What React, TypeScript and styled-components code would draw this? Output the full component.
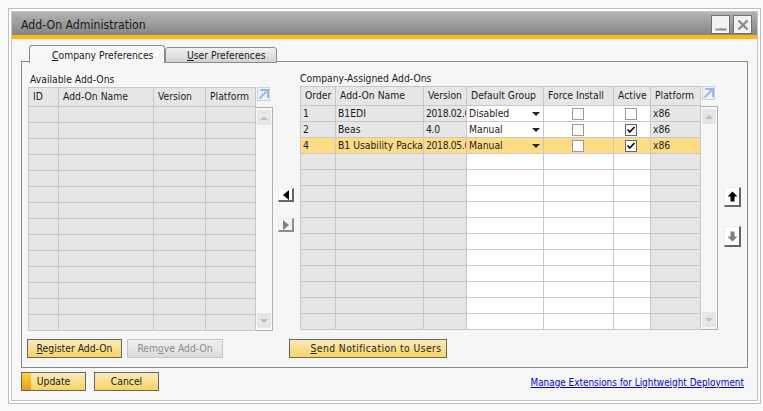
// App.tsx
import React from "react";
import styled, { createGlobalStyle } from "styled-components";

type Cell = { text?: string; kind?: "text" | "select" | "check"; checked?: boolean };
type Column = { title: string; width: number; plain?: boolean; center?: boolean; tight?: boolean };

const availableColumns: Column[] = [
  { title: "ID", width: 31 },
  { title: "Add-On Name", width: 95 },
  { title: "Version", width: 52 },
  { title: "Platform", width: 50 },
];

const assignedColumns: Column[] = [
  { title: "Order", width: 36 },
  { title: "Add-On Name", width: 88 },
  { title: "Version", width: 43, tight: true },
  { title: "Default Group", width: 77, plain: true },
  { title: "Force Install", width: 70, plain: true, center: true },
  { title: "Active", width: 37, plain: true, center: true },
  { title: "Platform", width: 50 },
];

const assignedRows = [
  { order: "1", name: "B1EDI", version: "2018.02.0", group: "Disabled", active: false },
  { order: "2", name: "Beas", version: "4.0", group: "Manual", active: true },
  { order: "4", name: "B1 Usability Package", version: "2018.05.0", group: "Manual", active: true, selected: true },
];

const GRID_ROWS = 14;

function ExpandIcon() {
  return (
    <svg width="13" height="14" viewBox="0 0 13 14">
      <rect x="0.5" y="0.5" width="12" height="13" fill="#eef2f8" stroke="#c4d3e8" />
      <path d="M3 3h8v8M10.5 3.5L2.5 11.5" fill="none" stroke="#9db9e0" strokeWidth="2" />
    </svg>
  );
}

function CheckMark() {
  return (
    <svg width="10" height="10" viewBox="0 0 10 10">
      <path d="M1.5 4.5l2.3 2.5L8.5 2" fill="none" stroke="#111" strokeWidth="1.8" />
    </svg>
  );
}

function DataGrid({
  columns,
  rows,
}: {
  columns: Column[];
  rows: { cells: Cell[]; selected?: boolean }[];
}) {
  const template = columns.map((c) => `${c.width}px`).join(" ");
  const filled = Array.from({ length: GRID_ROWS }).map((_, i) => rows[i] || { cells: [] as Cell[], selected: false });

  return (
    <GridWrap>
      <HeaderRow>
        <GridRow $template={template} $height={20}>
          {columns.map((c) => (
            <HeaderCell key={c.title}>{c.title}</HeaderCell>
          ))}
        </GridRow>
        <ExpandSlot>
          <ExpandIcon />
        </ExpandSlot>
      </HeaderRow>
      <BodyRow>
        <div>
          {filled.map((row, r) => (
            <GridRow key={r} $template={template} $height={16}>
              {columns.map((c, i) => {
                const cell = row.cells[i] || {};
                return (
                  <BodyCell key={c.title} $plain={c.plain} $selected={row.selected} $center={c.center} $tight={c.tight}>
                    {cell.kind === "check" && <CheckBox $checked={cell.checked}>{cell.checked ? <CheckMark /> : null}</CheckBox>}
                    {cell.kind === "select" && (
                      <>
                        <span>{cell.text}</span>
                        <SelectArrow />
                      </>
                    )}
                    {(!cell.kind || cell.kind === "text") && cell.text}
                  </BodyCell>
                );
              })}
            </GridRow>
          ))}
        </div>
        <ScrollBar>
          <ScrollButton>
            <ScrollTriangle $up />
          </ScrollButton>
          <ScrollButton>
            <ScrollTriangle />
          </ScrollButton>
        </ScrollBar>
      </BodyRow>
    </GridWrap>
  );
}

function App() {
  const rows = assignedRows.map((r) => ({
    selected: r.selected,
    cells: [
      { text: r.order },
      { text: r.name },
      { text: r.version },
      { kind: "select", text: r.group },
      { kind: "check", checked: false },
      { kind: "check", checked: r.active },
      { text: "x86" },
    ] as Cell[],
  }));

  return (
    <>
      <GlobalStyle />
      <Window>
        <WindowInner>
          <TitleBar>
            <Title>Add-On Administration</Title>
            <TitleButtons>
              <TitleButton>
                <svg width="12" height="12" viewBox="0 0 12 12">
                  <path d="M0.5 10.5h11" stroke="#8a8a8a" strokeWidth="2" />
                </svg>
              </TitleButton>
              <TitleButton>
                <svg width="12" height="12" viewBox="0 0 12 12">
                  <path d="M1.5 1.5l9 9M10.5 1.5l-9 9" stroke="#8a8a8a" strokeWidth="2.4" />
                </svg>
              </TitleButton>
            </TitleButtons>
          </TitleBar>
          <Body>
            <TabStrip>
              <Tab $active>
                <u>C</u>ompany Preferences
              </Tab>
              <Tab>
                <u>U</u>ser Preferences
              </Tab>
            </TabStrip>
            <Panel>
              <Columns>
                <Section $top={1}>
                  <SectionLabel>Available Add-Ons</SectionLabel>
                  <DataGrid columns={availableColumns} rows={[]} />
                </Section>
                <SideButtons $gap={16} $top={116} $left={5} $right={6} $width={16}>
                  <SideButton $h={14}>
                    <Triangle $dir="left" />
                  </SideButton>
                  <SideButton $h={14} $off>
                    <Triangle $dir="right" $off />
                  </SideButton>
                </SideButtons>
                <Section>
                  <SectionLabel $flush>Company-Assigned Add-Ons</SectionLabel>
                  <DataGrid columns={assignedColumns} rows={rows} />
                </Section>
                <SideButtons $gap={19} $top={115} $left={6} $right={0} $width={17}>
                  <SideButton $h={20}>
                    <svg viewBox="0 0 11 11" width="11" height="11">
                      <path d="M5.5 0.5L10.5 5.5H7.5V10.5H3.5V5.5H0.5Z" fill="#000" />
                    </svg>
                  </SideButton>
                  <SideButton $h={21}>
                    <svg viewBox="0 0 11 11" width="11" height="11">
                      <path d="M5.5 10.5L10.5 5.5H7.5V0.5H3.5V5.5H0.5Z" fill="#808080" />
                    </svg>
                  </SideButton>
                </SideButtons>
              </Columns>
              <PanelActions>
                <ActionButton $width={95}>
                  <u>R</u>egister Add-On
                </ActionButton>
                <ActionButton $width={96} $disabled>
                  Rem<u>o</u>ve Add-On
                </ActionButton>
                <ActionButton $width={158} $gapLeft={61} $track={0.4} $inset={16}>
                  <u>S</u>end Notification to Users
                </ActionButton>
              </PanelActions>
            </Panel>
            <Footer>
              <FooterButtons>
                <ActionButton $width={65} $primary>
                  Update
                </ActionButton>
                <ActionButton $width={65}>Cancel</ActionButton>
              </FooterButtons>
              <FooterLink href="#">Manage Extensions for Lightweight Deployment</FooterLink>
            </Footer>
          </Body>
        </WindowInner>
      </Window>
    </>
  );
}

const GlobalStyle = createGlobalStyle`
  html, body {
    margin: 0;
    padding: 0;
    background: #fafafa;
  }
  body {
    font-family: "DejaVu Sans Condensed", "Liberation Sans", sans-serif;
    font-size: 10.3px;
    color: #1c1c1c;
  }
`;

const Window = styled.div`
  box-sizing: border-box;
  width: 753px;
  height: 396px;
  margin: 8px 0 0 8px;
  padding: 2px;
  background: #fff;
  border: 1px solid #bdbdbd;
`;

const WindowInner = styled.div`
  box-sizing: border-box;
  height: 100%;
  border: 1px solid #c4c4c4;
  display: flex;
  flex-direction: column;
  background: #f7f7f7;
`;

const TitleBar = styled.div`
  flex: none;
  box-sizing: border-box;
  height: 27px;
  padding: 2px 5px 0 9px;
  display: flex;
  align-items: center;
  justify-content: space-between;
  background: linear-gradient(#b3b3b3, #858585);
  border-bottom: 4px solid #fdb813;
`;

const Title = styled.div`
  font-size: 12.2px;
  color: #1a1a1a;
`;

const TitleButtons = styled.div`
  display: flex;
  gap: 3px;
`;

const TitleButton = styled.div`
  box-sizing: border-box;
  width: 19px;
  height: 19px;
  border: 1px solid #707070;
  background: #f2f2f2;
  display: flex;
  align-items: center;
  justify-content: center;
`;

const Body = styled.div`
  flex: 1;
  padding: 6px 9px 0 9px;
  display: flex;
  flex-direction: column;
`;

const TabStrip = styled.div`
  display: flex;
  align-items: flex-end;
  height: 18px;
  padding-left: 8px;
  margin-bottom: -2px;
  position: relative;
  z-index: 1;
`;

const Tab = styled.div<{ $active?: boolean }>`
  box-sizing: border-box;
  height: ${(p) => (p.$active ? 18 : 16)}px;
  width: ${(p) => (p.$active ? 136 : 112)}px;
  padding-left: ${(p) => (p.$active ? 22 : 21)}px;
  line-height: ${(p) => (p.$active ? 19 : 15)}px;
  border: 1px solid #8a8a8a;
  border-bottom: ${(p) => (p.$active ? "none" : "1px solid #8a8a8a")};
  border-radius: 3px 3px 0 0;
  background: ${(p) => (p.$active ? "#f7f7f7" : "linear-gradient(#f2f2f2, #d2d2d2)")};
`;

const Panel = styled.div`
  box-sizing: border-box;
  height: 307px;
  border: 1px solid #8a8a8a;
  background: #f6f6f6;
  padding: 10px 0 0 6px;
`;

const Columns = styled.div`
  display: flex;
  align-items: flex-start;
`;

const Section = styled.div<{ $top?: number }>`
  flex: none;
  display: flex;
  flex-direction: column;
  margin-top: ${(p) => p.$top || 0}px;
`;

const SectionLabel = styled.div<{ $flush?: boolean }>`
  height: 14px;
  line-height: 13px;
  padding-left: ${(p) => (p.$flush ? 0 : 2)}px;
`;

const SideButtons = styled.div<{ $gap: number; $top: number; $left: number; $right: number; $width: number }>`
  flex: none;
  display: flex;
  flex-direction: column;
  gap: ${(p) => p.$gap}px;
  width: ${(p) => p.$width}px;
  margin: ${(p) => p.$top}px ${(p) => p.$right}px 0 ${(p) => p.$left}px;
`;

const SideButton = styled.div<{ $h: number; $off?: boolean }>`
  box-sizing: border-box;
  height: ${(p) => p.$h}px;
  background: ${(p) => (p.$off ? "#f4f4f4" : "#fff")};
  border: 1px solid #ececec;
  border-right: 2px solid ${(p) => (p.$off ? "#8c8c8c" : "#666")};
  border-bottom: 2px solid ${(p) => (p.$off ? "#8c8c8c" : "#666")};
  display: flex;
  align-items: center;
  justify-content: center;
`;

const Triangle = styled.div<{ $dir: "left" | "right"; $off?: boolean }>`
  width: 0;
  height: 0;
  border-top: 5px solid transparent;
  border-bottom: 5px solid transparent;
  ${(p) =>
    p.$dir === "left"
      ? `border-right: 6px solid ${p.$off ? "#808080" : "#000"};`
      : `border-left: 6px solid ${p.$off ? "#808080" : "#000"};`}
`;

const GridWrap = styled.div`
  display: flex;
  flex-direction: column;
`;

const HeaderRow = styled.div`
  display: flex;
`;

const ExpandSlot = styled.div`
  width: 17px;
  flex: none;
  padding-left: 1px;
  box-sizing: border-box;
`;

const BodyRow = styled.div`
  display: flex;
`;

const GridRow = styled.div<{ $template: string; $height: number }>`
  display: grid;
  grid-template-columns: ${(p) => p.$template};
  height: ${(p) => p.$height}px;
`;

const HeaderCell = styled.div`
  box-sizing: border-box;
  background: #e6e6e6;
  border-right: 1px solid #c8c8c8;
  border-bottom: 1px solid #c8c8c8;
  border-top: 1px solid #c8c8c8;
  padding: 0 3px 0 4px;
  line-height: 16px;
  white-space: nowrap;
  overflow: hidden;

  &:first-child {
    border-left: 1px solid #c8c8c8;
  }
`;

const BodyCell = styled.div<{ $plain?: boolean; $selected?: boolean; $center?: boolean; $tight?: boolean }>`
  box-sizing: border-box;
  background: ${(p) => (p.$selected ? "#fddc85" : p.$plain ? "#fff" : "#e6e6e6")};
  border-right: 1px solid #c8c8c8;
  border-bottom: 1px solid #c8c8c8;
  padding: ${(p) => (p.$center ? "0 2px 0 0" : "0 0 0 2px")};
  line-height: 15px;
  letter-spacing: ${(p) => (p.$tight ? -0.35 : 0)}px;
  white-space: nowrap;
  overflow: hidden;
  display: flex;
  align-items: center;
  justify-content: ${(p) => (p.$center ? "center" : "space-between")};

  &:first-child {
    border-left: 1px solid #c8c8c8;
  }
`;

const CheckBox = styled.div<{ $checked?: boolean }>`
  box-sizing: border-box;
  width: 12px;
  height: 12px;
  border: 1px solid ${(p) => (p.$checked ? "#666" : "#999")};
  background: #fff;
  display: flex;
  align-items: center;
  justify-content: center;
`;

const SelectArrow = styled.div`
  width: 0;
  height: 0;
  margin-right: 3px;
  border-left: 4px solid transparent;
  border-right: 4px solid transparent;
  border-top: 4px solid #222;
`;

const ScrollBar = styled.div`
  box-sizing: border-box;
  width: 17px;
  flex: none;
  background: #f7f7f7;
  border: 1px solid #b0b0b0;
  border-left: none;
  padding: 2px 1px;
  display: flex;
  flex-direction: column;
  justify-content: space-between;
`;

const ScrollButton = styled.div`
  height: 15px;
  background: #e6e6e6;
  display: flex;
  align-items: center;
  justify-content: center;
`;

const ScrollTriangle = styled.div<{ $up?: boolean }>`
  width: 0;
  height: 0;
  border-left: 4px solid transparent;
  border-right: 4px solid transparent;
  ${(p) => (p.$up ? "border-bottom: 4px solid #c0c0c0;" : "border-top: 4px solid #c0c0c0;")}
`;

const PanelActions = styled.div`
  display: flex;
  gap: 5px;
  margin: 8px 0 0 -1px;
`;

const ActionButton = styled.div<{
  $width: number;
  $primary?: boolean;
  $disabled?: boolean;
  $gapLeft?: number;
  $track?: number;
  $inset?: number;
}>`
  box-sizing: border-box;
  width: ${(p) => p.$width}px;
  height: 19px;
  margin-left: ${(p) => p.$gapLeft || 0}px;
  padding-left: ${(p) => p.$inset || 0}px;
  line-height: 16px;
  letter-spacing: ${(p) => p.$track || 0}px;
  text-align: center;
  border: 1px solid ${(p) => (p.$disabled ? "#c6c6c6" : "#666")};
  color: ${(p) => (p.$disabled ? "#8c8c8c" : "#1c1c1c")};
  background: ${(p) =>
    p.$disabled ? "linear-gradient(#f0f0f0, #dcdcdc)" : "linear-gradient(#faebbd, #f8d45f)"};
  ${(p) =>
    p.$primary &&
    `background: linear-gradient(#fcd33a, #ee9a1a) left / 9px 100% no-repeat, linear-gradient(#faebbd, #f8d45f);`}
`;

const Footer = styled.div`
  display: flex;
  align-items: center;
  justify-content: space-between;
  margin-top: 4px;
  padding-right: 4px;
`;

const FooterButtons = styled.div`
  display: flex;
  gap: 8px;
`;

const FooterLink = styled.a`
  color: #0000e0;
  font-size: 9.9px;
  margin-top: 1px;
  text-decoration: underline;
`;

export default App;
